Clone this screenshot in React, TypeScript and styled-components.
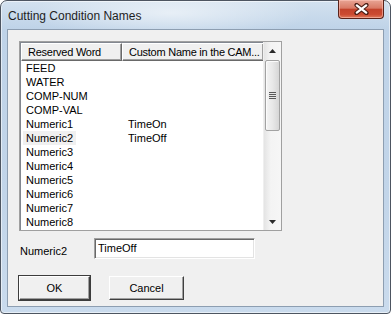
import React from 'react';
import styled, { createGlobalStyle } from 'styled-components';

const GlobalStyle = createGlobalStyle`
  html, body {
    margin: 0;
    padding: 0;
    background: #ffffff;
  }
  body {
    font-family: "Liberation Sans", Arial, sans-serif;
    font-size: 11px;
    color: #000;
  }
`;

const rows: [string, string][] = [
  ['FEED', ''],
  ['WATER', ''],
  ['COMP-NUM', ''],
  ['COMP-VAL', ''],
  ['Numeric1', 'TimeOn'],
  ['Numeric2', 'TimeOff'],
  ['Numeric3', ''],
  ['Numeric4', ''],
  ['Numeric5', ''],
  ['Numeric6', ''],
  ['Numeric7', ''],
  ['Numeric8', ''],
];

const Window = styled.div`
  box-sizing: border-box;
  width: 391px;
  height: 314px;
  display: flex;
  flex-direction: column;
  padding: 0 6px 6px 6px;
  border: 1px solid #4d5561;
  border-radius: 7px 7px 4px 4px;
  box-shadow: inset 0 0 0 1px rgba(255, 255, 255, 0.55);
  background:
    radial-gradient(ellipse 140px 26px at 170px 12px, rgba(255, 255, 255, 0.55), rgba(255, 255, 255, 0)),
    linear-gradient(to bottom, #d3e1ef 0, #bfd3e8 28px, #c2d5e9 200px, #cadbed 100%);
`;

const TitleBar = styled.div`
  height: 28px;
  display: flex;
  align-items: flex-start;
  justify-content: space-between;
`;

const Title = styled.div`
  font-family: "Liberation Sans", Arial, sans-serif;
  font-size: 12px;
  color: #1e1e1e;
  padding: 8px 0 0 1px;
`;

const CloseButton = styled.div`
  box-sizing: border-box;
  width: 46px;
  height: 19px;
  margin-top: -1px;
  display: flex;
  align-items: center;
  justify-content: center;
  border: 1px solid #5a2219;
  border-top: none;
  border-radius: 0 0 4px 4px;
  box-shadow: inset 0 0 0 1px rgba(255, 200, 190, 0.55);
  background: linear-gradient(to bottom, #e8a595 0, #d97a66 45%, #c3432c 52%, #cc4a31 80%, #de7a5c 100%);
`;

const Client = styled.div`
  flex: 1;
  display: flex;
  flex-direction: column;
  background: #f0f0f0;
  border: 1px solid #8d9eb1;
  padding: 11px 0 0 11px;
`;

const ListView = styled.div`
  box-sizing: border-box;
  width: 263px;
  height: 190px;
  display: flex;
  background: #ffffff;
  border: 1px solid #a0a0a0;
  box-shadow: inset 1px 1px 0 #828790;
`;

const ListBody = styled.div`
  flex: 1;
  display: flex;
  flex-direction: column;
  padding: 1px 0 0 1px;
  overflow: hidden;
`;

const Header = styled.div`
  display: grid;
  grid-template-columns: 101px 142px;
  height: 18px;
`;

const HeaderCell = styled.div`
  box-sizing: border-box;
  display: flex;
  align-items: center;
  padding-left: 6px;
  background: #f0f0f0;
  border-top: 1px solid #ffffff;
  border-left: 1px solid #ffffff;
  border-right: 1px solid #696969;
  border-bottom: 1px solid #696969;
  box-shadow: inset -1px -1px 0 #a0a0a0;
  white-space: nowrap;
  overflow: hidden;
  letter-spacing: -0.25px;
`;

const Row = styled.div`
  display: grid;
  grid-template-columns: 101px 142px;
  height: 14px;
  line-height: 14px;
`;

const Cell = styled.div`
  padding-left: 5px;
  white-space: nowrap;
`;

const ValueCell = styled(Cell)`
  padding-left: 6px;
`;

const Label = styled.span<{ $selected?: boolean }>`
  display: inline-block;
  padding: 0 3px;
  margin-left: -3px;
  background: ${(p) => (p.$selected ? '#f0f0f0' : 'transparent')};
`;

const ScrollBar = styled.div`
  width: 17px;
  display: flex;
  flex-direction: column;
  background: linear-gradient(to right, #e4e4e4, #f4f4f4 40%, #f6f6f6);
  border-left: 1px solid #efefef;
`;

const ArrowButton = styled.div`
  height: 17px;
  display: flex;
  align-items: center;
  justify-content: center;
`;

const Track = styled.div`
  flex: 1;
  padding: 1px 1px 0 1px;
`;

const Thumb = styled.div`
  box-sizing: border-box;
  height: 71px;
  display: flex;
  align-items: center;
  justify-content: center;
  border: 1px solid #a2a2a2;
  border-radius: 2px;
  background: linear-gradient(to right, #f4f4f4, #e8e8e8 50%, #d6d6d6);
  box-shadow: inset 1px 1px 0 #fbfbfb;
`;

const Grip = styled.div`
  width: 7px;
  height: 7px;
  background: repeating-linear-gradient(to bottom, #5a5a5a 0, #5a5a5a 1px, #e6e6e6 1px, #e6e6e6 2px);
`;

const FieldRow = styled.div`
  display: flex;
  align-items: flex-start;
  margin-top: 7px;
  padding-left: 1px;
`;

const FieldLabel = styled.div`
  width: 74px;
  margin-top: 7px;
  line-height: 13px;
`;

const TextBox = styled.div`
  box-sizing: border-box;
  width: 161px;
  height: 21px;
  padding: 3px 0 0 3px;
  line-height: 13px;
  background: #ffffff;
  border-top: 1px solid #a0a0a0;
  border-left: 1px solid #a0a0a0;
  border-right: 1px solid #ffffff;
  border-bottom: 1px solid #ffffff;
  box-shadow: inset 1px 1px 0 #696969, inset -1px -1px 0 #e3e3e3;
`;

const ButtonRow = styled.div`
  display: flex;
  gap: 19px;
  margin-top: 17px;
`;

const Button = styled.div<{ $w: number; $default?: boolean }>`
  box-sizing: border-box;
  width: ${(p) => p.$w}px;
  height: 24px;
  display: flex;
  align-items: center;
  justify-content: center;
  border-top: 1px solid #ffffff;
  border-left: 1px solid #ffffff;
  border-right: 1px solid #404040;
  border-bottom: 1px solid #404040;
  box-shadow: inset -1px -1px 0 #a0a0a0${(p) => (p.$default ? ', 0 0 0 1px #3c3c3c' : '')};
  background: #f0f0f0;
  font-size: 11px;
`;

const CloseIcon = () => (
  <svg width="15" height="12" viewBox="0 0 15 12">
    <path d="M2.5 2 L12.5 10 M12.5 2 L2.5 10" stroke="#4a1e16" strokeWidth="4.2" strokeLinecap="round" />
    <path d="M2.8 2.4 L12.2 9.6 M12.2 2.4 L2.8 9.6" stroke="#ffffff" strokeWidth="2.3" strokeLinecap="round" />
  </svg>
);

const UpArrow = () => (
  <svg width="7" height="4" viewBox="0 0 7 4">
    <path d="M3.5 0 L7 4 L0 4 Z" fill="#2b2b2b" />
  </svg>
);

const DownArrow = () => (
  <svg width="7" height="4" viewBox="0 0 7 4">
    <path d="M0 0 L7 0 L3.5 4 Z" fill="#2b2b2b" />
  </svg>
);

function App() {
  return (
    <>
      <GlobalStyle />
      <Window>
        <TitleBar>
          <Title>Cutting Condition Names</Title>
          <CloseButton>
            <CloseIcon />
          </CloseButton>
        </TitleBar>
        <Client>
          <ListView>
            <ListBody>
              <Header>
                <HeaderCell>Reserved Word</HeaderCell>
                <HeaderCell>Custom Name in the CAM...</HeaderCell>
              </Header>
              {rows.map(([word, name]) => (
                <Row key={word}>
                  <Cell>
                    <Label $selected={word === 'Numeric2'}>{word}</Label>
                  </Cell>
                  <ValueCell>{name}</ValueCell>
                </Row>
              ))}
            </ListBody>
            <ScrollBar>
              <ArrowButton>
                <UpArrow />
              </ArrowButton>
              <Track>
                <Thumb>
                  <Grip />
                </Thumb>
              </Track>
              <ArrowButton>
                <DownArrow />
              </ArrowButton>
            </ScrollBar>
          </ListView>
          <FieldRow>
            <FieldLabel>Numeric2</FieldLabel>
            <TextBox>TimeOff</TextBox>
          </FieldRow>
          <ButtonRow>
            <Button $w={71} $default>OK</Button>
            <Button $w={75}>Cancel</Button>
          </ButtonRow>
        </Client>
      </Window>
    </>
  );
}

export default App;
